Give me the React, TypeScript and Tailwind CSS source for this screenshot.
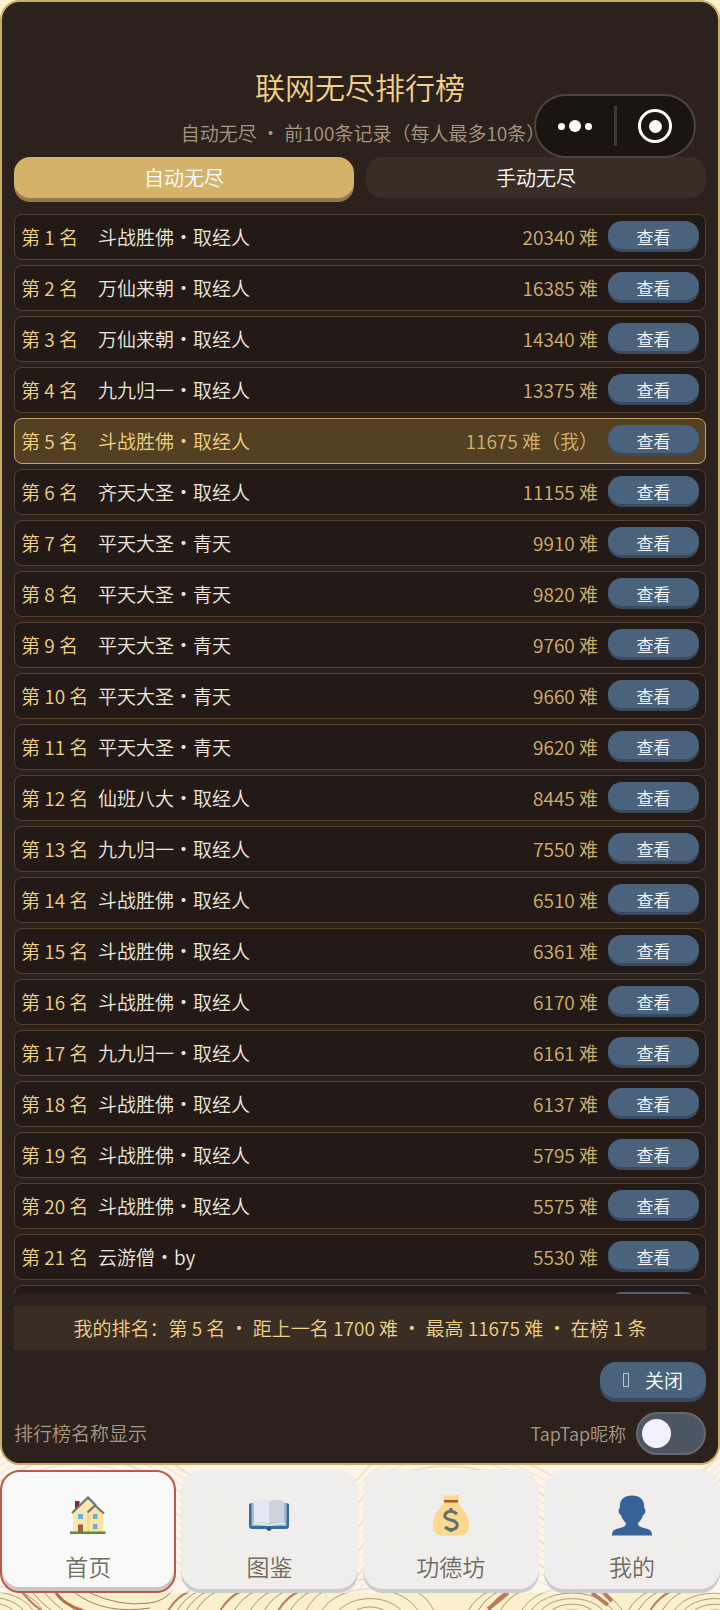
import React, { useState } from "react";

type Entry = { name: string; score: number; me?: boolean };

const entries: Entry[] = [
  { name: "斗战胜佛·取经人", score: 20340 },
  { name: "万仙来朝·取经人", score: 16385 },
  { name: "万仙来朝·取经人", score: 14340 },
  { name: "九九归一·取经人", score: 13375 },
  { name: "斗战胜佛·取经人", score: 11675, me: true },
  { name: "齐天大圣·取经人", score: 11155 },
  { name: "平天大圣·青天", score: 9910 },
  { name: "平天大圣·青天", score: 9820 },
  { name: "平天大圣·青天", score: 9760 },
  { name: "平天大圣·青天", score: 9660 },
  { name: "平天大圣·青天", score: 9620 },
  { name: "仙班八大·取经人", score: 8445 },
  { name: "九九归一·取经人", score: 7550 },
  { name: "斗战胜佛·取经人", score: 6510 },
  { name: "斗战胜佛·取经人", score: 6361 },
  { name: "斗战胜佛·取经人", score: 6170 },
  { name: "九九归一·取经人", score: 6161 },
  { name: "斗战胜佛·取经人", score: 6137 },
  { name: "斗战胜佛·取经人", score: 5795 },
  { name: "斗战胜佛·取经人", score: 5575 },
  { name: "云游僧·by", score: 5530 },
];

function Row({ entry, rank }: { entry: Entry; rank: number }) {
  const tone = entry.me
    ? "border-[#c6a660] bg-[#533f22] text-[#f3d283]"
    : "border-[#56432f] bg-[#231a18] text-[#f0e8dc]";
  return (
    <li className={`flex h-[46px] shrink-0 items-center rounded-lg border px-1.5 text-[19px] leading-7 ${tone}`}>
      <span className="w-[77px] shrink-0 whitespace-nowrap text-[#f3d283]">第 {rank} 名</span>
      <span className="min-w-0 flex-1 truncate">{entry.name}</span>
      <span className="mr-2.5 text-[#d4b26a]">
        {entry.score} 难{entry.me && "（我）"}
      </span>
      <button
        type="button"
        className="mb-1 h-7 w-[91px] rounded-2xl bg-[#4b627d] pt-1 text-[17px] leading-6 text-white shadow-[0_3px_0_#3a4a60]"
      >
        查看
      </button>
    </li>
  );
}

function HouseIcon() {
  return (
    <svg viewBox="0 0 36 38" className="h-[38px] w-9" aria-hidden="true">
      <path d="M5 5h4.500v10H5z" fill="#8e1f2c" />
      <path d="M3 17 18 2l15 15v19H3z" fill="#fbe6ab" />
      <path d="M17 18l8-7 8 7v18H18z" fill="#fae2a4" />
      <path d="M18 18v18" stroke="#e8cd8c" />
      <path d="M2 17 18 1.500l8 8M17.500 16.500 25 9.500l9 8" fill="none" stroke="#6c7379" strokeWidth="2.200" />
      <path d="M8 18h5v5H8zM23 18h4.500v5H23zM23 28h4.500v5H23z" fill="#6badde" />
      <path d="M8 28.500h5V36H8z" fill="#a35b3f" />
      <path d="M0 35.500h35.500v2.500H0z" fill="#5c8a35" />
    </svg>
  );
}

function BookIcon() {
  return (
    <svg viewBox="0 0 42 32" className="h-8 w-[42px]" aria-hidden="true">
      <path d="M1 6q0-2 3-2h34q3 0 3 2v21q0 3-3 3H24q-1 2-3 2t-3-2H4q-3 0-3-3z" fill="#376ba0" />
      <path d="M3.500 4h35v23h-35z" fill="#a9bccb" />
      <path d="M6 2.500q3-2 6-1.500 6 0 9 1v23q-7-3-15-1z" fill="#e3e8f2" />
      <path d="M36 2.500q-3-2-6-1.500-6 0-9 1v23q7-3 15-1z" fill="#ccd3dd" />
      <path d="M5 24q10-1 16 2 6-3 16-2v1.500q-10-1-16 2-6-3-16-2z" fill="#edf0f3" />
      <path d="M20 27h2.500v4H20z" fill="#294f7b" />
    </svg>
  );
}

function MoneyIcon() {
  return (
    <svg viewBox="0 0 38 42" className="h-[42px] w-[38px]" aria-hidden="true">
      <path d="M12 8C9 14 1 19 1 31c0 7 4 10.500 8 10.500h20c5 0 8-4 8-10.500C37 20 29 14 26 8z" fill="#f8d98e" />
      <path d="M11 1q8 1.500 16-.5v6H12z" fill="#f8d98e" />
      <path d="M12 6h14v2.500H12z" fill="#a9542f" />
      <path d="M25 20q-6-5-11-1c-3 4 0 6 5 7s8 4 5 8q-5 4-11-1M19 14v4m0 16v4" fill="none" stroke="#646c70" strokeWidth="3" />
    </svg>
  );
}

function PersonIcon() {
  return (
    <svg viewBox="0 0 40 41" className="h-[41px] w-10" aria-hidden="true">
      <path
        d="M20 .5C11 .5 7 6 8 13c-2 0-2 6 1 7 1 4 3 6 5 8 0 3-2 4-6 5-6 1-8 3-8 7.500h40c0-4.500-2-6.500-8-7.500-4-1-6-2-6-5 2-2 4-4 5-8 3-1 3-7 1-7C33 6 29 .5 20 .5z"
        fill="#356397"
      />
    </svg>
  );
}

const tabs = [
  { label: "首页", icon: <HouseIcon /> },
  { label: "图鉴", icon: <BookIcon /> },
  { label: "功德坊", icon: <MoneyIcon /> },
  { label: "我的", icon: <PersonIcon /> },
];

const arcs = [
  { x: -10, radii: [26, 34, 42, 50] },
  { x: 370, radii: [20, 32, 46, 60] },
  { x: 572, radii: [8, 16, 24, 32, 40, 48] },
  { x: 715, radii: [16, 24, 32, 40] },
];
const strands = [22, 32, 44, 56, 180, 189, 198, 208, 232, 246, 262, 276, 290, 302, 480, 490, 500, 512, 640, 650, 662, 674];
const bands = [0, 8, 16, 24, 32, 40, 48, 56, 64, 72, 80, 88, 96, 104, 112];

function Waves() {
  return (
    <svg
      className="absolute inset-0 h-full w-full"
      viewBox="0 0 720 165"
      preserveAspectRatio="none"
      fill="none"
      aria-hidden="true"
    >
      {bands.map((y) => (
        <path
          key={y}
          d={`M-10 ${y + 20}Q80 ${y - 50} 190 ${y + 30}T370 ${y + 20}Q450 ${y - 30} 550 ${y + 30}T730 ${y}`}
          stroke="#cf9f80"
          strokeOpacity="0.7"
          strokeWidth={y % 3 ? 1 : 2}
        />
      ))}
      <path d="M0 148h720v17H0z" fill="#fbf0cd" />
      {arcs.map((a) =>
        a.radii.map((r) => (
          <ellipse key={`${a.x}-${r}`} cx={a.x} cy="176" rx={r * 1.1} ry={r * 0.7} stroke="#b09a7a" />
        )),
      )}
      {strands.map((x, i) => (
        <path
          key={x}
          d={x < 60 ? `M${x} 147q10 12 20 19` : `M${x + 10} 146q-14 6-22 20`}
          stroke={i % 4 === 0 ? "#b97e58" : "#a98d6b"}
          strokeWidth={i % 4 === 0 ? 2 : 1}
        />
      ))}
      <path d="M90 148q30 14 60 10 14-2 22-12M75 148q30 22 75 15" stroke="#a97a58" />
      <path d="M56 148q8 12 28 18" stroke="#b0714c" strokeWidth="3" />
      <path d="m508 148-20 16M592 148l16 12m-4-12 8 8" stroke="#bb7d56" strokeWidth="4" />
    </svg>
  );
}

export default function App() {
  const [tap, setTap] = useState(false);
  return (
    <div className="relative flex min-h-screen flex-col bg-[#fbefcf] font-['Noto_Sans_CJK_SC',sans-serif] font-[350]">
      <main className="relative z-10 flex flex-col rounded-[20px] border-2 border-[#c9ad67] bg-[#2c211c] px-3 pt-[61px] pb-2">
        <h1 className="text-center text-[30px] leading-[46px] text-[#f3d283]">联网无尽排行榜</h1>
        <p className="mt-2.5 pl-1.5 text-center text-[19px] leading-7 text-[#a99984]">
          自动无尽 · 前100条记录（每人最多10条）
        </p>
        <div className="mt-2.5 flex gap-3">
          <button
            type="button"
            className="h-[41px] flex-1 rounded-2xl bg-[#d5b26a] text-[20px] text-white shadow-[0_4px_0_#92794a]"
          >
            自动无尽
          </button>
          <button type="button" className="h-[41px] flex-1 rounded-2xl bg-[#3a2d25] text-[20px] text-white">
            手动无尽
          </button>
        </div>

        <ol className="mt-4 flex h-[1080px] flex-col gap-[5px] overflow-hidden">
          {entries.map((e, i) => (
            <Row key={i} entry={e} rank={i + 1} />
          ))}
          <li className="flex h-[46px] shrink-0 justify-end rounded-lg border border-[#56432f] bg-[#231a18] pt-[6px] pr-1.5">
            <span className="h-7 w-[91px] rounded-2xl bg-[#4b627d]" />
          </li>
        </ol>

        <p className="mt-3 bg-[#392d24] py-2 text-center text-[19px] leading-7 text-[#f3d283]">
          我的排名：第 5 名 · 距上一名 1700 难 · 最高 11675 难 · 在榜 1 条
        </p>
        <button
          type="button"
          className="mt-3 flex h-9 w-[106px] items-center justify-center gap-4 self-end rounded-2xl bg-[#4b627d] text-[19px] text-white shadow-[0_4px_0_#3a4a60]"
        >
          <span className="h-3.5 w-1.5 border border-[#b9c4d2]" />
          关闭
        </button>
        <div className="mt-3.5 flex h-[43px] items-center text-[19px] text-[#a99984]">
          <span className="flex-1">排行榜名称显示</span>
          <label htmlFor="nickname" className="mr-2.5 text-[18px]">TapTap昵称</label>
          <span className="relative flex h-[43px] w-[70px] items-center rounded-full border-2 border-[#68686c] bg-[#4c5663] px-1">
            <input
              id="nickname"
              type="checkbox"
              role="switch"
              checked={tap}
              onChange={(e) => setTap(e.target.checked)}
              className="peer absolute inset-0 appearance-none rounded-full"
            />
            <span className="pointer-events-none relative size-[29px] rounded-full bg-[#f2f1fb] peer-checked:ml-auto" />
          </span>
        </div>
      </main>

      <div className="absolute top-[94px] right-6 z-20 flex h-16 w-[162px] items-center rounded-full border-2 border-[#4d4440] bg-[#1a1512]">
        <button type="button" aria-label="更多" className="flex flex-1 items-center justify-center gap-1">
          <span className="size-[7px] rounded-full bg-white" />
          <span className="size-3 rounded-full bg-white" />
          <span className="size-[7px] rounded-full bg-white" />
        </button>
        <span className="h-10 w-[3px] bg-[#3f3936]" />
        <button type="button" aria-label="退出" className="flex flex-1 items-center justify-center">
          <span className="flex size-[34px] items-center justify-center rounded-full border-[3px] border-white">
            <span className="size-[13px] rounded-full bg-white" />
          </span>
        </button>
      </div>

      <div className="relative -mt-5 flex-1 overflow-hidden">
        <Waves />
        <nav className="relative grid grid-cols-4 gap-[5px] bg-[#fff9f6]/60 pt-[25px]">
          {tabs.map((t, i) => (
            <a
              key={t.label}
              href="#"
              aria-current={i === 0 ? "page" : undefined}
              className={
                i === 0
                  ? "flex h-[123px] flex-col items-center rounded-[20px] border-2 border-[#b95a4a] bg-[#f9f9f9] pt-5 text-[#716a5e] shadow-[inset_0_-4px_0_#cbc5c3]"
                  : "flex h-[123px] flex-col items-center rounded-[20px] bg-[#ededec]/90 pt-[22px] text-[#716a5e] shadow-[inset_0_-4px_0_#cbccd1]"
              }
            >
              <span className="flex h-[46px] items-center">{t.icon}</span>
              <span className="mt-3 text-[23px] leading-8">{t.label}</span>
            </a>
          ))}
        </nav>
      </div>
    </div>
  );
}
